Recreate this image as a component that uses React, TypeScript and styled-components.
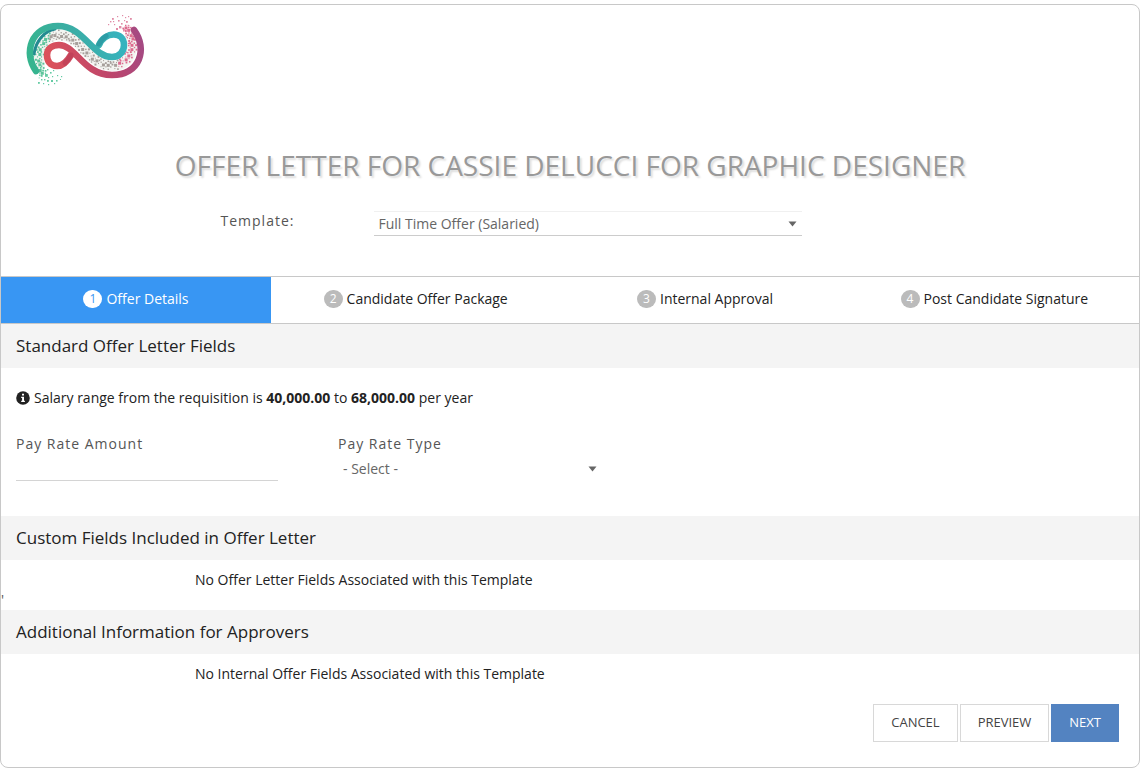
import React from "react";
import styled, { createGlobalStyle } from "styled-components";

const GlobalStyle = createGlobalStyle`
  *, *::before, *::after { box-sizing: border-box; }
  body {
    margin: 0;
    background: #fff;
    color: #222;
    font: 14px/20px "Open Sans", "Noto Sans", sans-serif;
  }
  button, input, select { font: inherit; }
`;

const Panel = styled.main`
  margin: 4px 0 0;
  border: 1px solid #c8c8c8;
  border-radius: 8px;
  background: #fff;
  overflow: hidden;
`;

const Brand = styled.header`
  padding: 7px 24px 0;
  height: 140px;
`;

const LogoArt = styled.svg`
  display: block;
  width: 122px;
  height: 78px;
`;

const Title = styled.h1`
  margin: 0;
  text-align: center;
  font-size: 28px;
  line-height: 40px;
  font-weight: 400;
  color: #999;
  text-transform: uppercase;
  text-shadow: 2px 2px 2px #ddd;
`;

const TemplateRow = styled.div`
  display: grid;
  grid-template-columns: 153px minmax(0, 428px);
  justify-content: center;
  align-items: start;
  padding: 26px 118px 40px 0;
`;

const FieldLabel = styled.label`
  display: block;
  letter-spacing: 1px;
  color: #555;
`;

const SelectBox = styled.div<{ $lined?: boolean }>`
  display: flex;
  align-items: center;
  position: relative;
  height: 25px;
  border-top: 1px solid ${(p) => (p.$lined ? "#f0f0f0" : "transparent")};
  border-bottom: 1px solid ${(p) => (p.$lined ? "#ccc" : "transparent")};
`;

const Select = styled.select`
  appearance: none;
  width: 100%;
  height: 23px;
  padding: 0 20px 0 5px;
  border: 0;
  background: transparent;
  color: #666;
`;

const Caret = styled.svg`
  position: absolute;
  right: 5px;
  width: 9px;
  height: 6px;
  pointer-events: none;
`;

const Steps = styled.nav`
  display: grid;
  grid-template-columns: 270px repeat(3, 1fr);
  border-top: 1px solid #c8c8c8;
  border-bottom: 1px solid #c8c8c8;
`;

const Step = styled.button<{ $active?: boolean }>`
  display: flex;
  align-items: center;
  justify-content: center;
  gap: 4px;
  height: 46px;
  padding: 0 0 2px;
  border: 0;
  background: ${(p) => (p.$active ? "#3896f3" : "#fff")};
  color: ${(p) => (p.$active ? "#fff" : "#222")};
  cursor: pointer;
`;

const StepNumber = styled.span<{ $active?: boolean }>`
  width: 19px;
  height: 18px;
  border-radius: 9px;
  background: ${(p) => (p.$active ? "#fff" : "#bbb")};
  color: ${(p) => (p.$active ? "#3896f3" : "#fff")};
  font-size: 12px;
  line-height: 18px;
  text-align: center;
`;

const SectionTitle = styled.h2`
  margin: 0;
  padding: 10px 15px;
  background: #f4f4f4;
  font-size: 17px;
  line-height: 24px;
  font-weight: 400;
`;

const OfferFields = styled.section`
  padding: 20px 15px 35px;
`;

const SalaryNote = styled.p`
  display: flex;
  align-items: center;
  gap: 4px;
  margin: 0 0 26px;
`;

const InfoMark = styled.svg`
  width: 14px;
  height: 14px;
  flex: none;
`;

const FieldGrid = styled.div`
  display: grid;
  grid-template-columns: 262px 264px;
  column-gap: 60px;
`;

const TextInput = styled.input`
  display: block;
  width: 100%;
  height: 27px;
  padding: 0 5px;
  border: 0;
  border-bottom: 1px solid #d4d4d4;
  background: transparent;
  color: #555;
`;

const FieldSelect = styled.div`
  padding-top: 2px;
`;

const EmptyNote = styled.p`
  margin: 0;
  padding: 10px 15px 0 194px;
`;

const NoteTail = styled.div`
  height: 20px;
  color: #555;
`;

const Actions = styled.footer`
  display: flex;
  justify-content: flex-end;
  gap: 2px;
  padding: 0 20px 25px;
`;

const ActionButton = styled.button<{ $primary?: boolean }>`
  height: 38px;
  padding: 0 17px 2px;
  border: 1px solid ${(p) => (p.$primary ? "#5383c1" : "#d8d8d8")};
  background: ${(p) => (p.$primary ? "#5383c1" : "#fff")};
  color: ${(p) => (p.$primary ? "#fff" : "#444")};
  font-size: 13px;
  text-transform: uppercase;
  cursor: pointer;
`;

// Centre line of the speckled band that runs between the two ribbons.
const BAND: [number, number][] = [
  [43, 76], [39, 68], [38, 58], [41, 46], [48, 37], [58, 35], [70, 37],
  [80, 46], [90, 56], [100, 63], [112, 66], [123, 62], [131, 53],
  [133, 42], [130, 33], [124, 26],
];

type Speck = { x: number; y: number; s: number; fill: string };

function makeSpecks(): Speck[] {
  let seed = 90210;
  const rnd = () => {
    seed = (seed * 16807) % 2147483647;
    return seed / 2147483647;
  };
  const specks: Speck[] = [];
  for (let i = 0; i < BAND.length - 1; i++) {
    const [x0, y0] = BAND[i];
    const [x1, y1] = BAND[i + 1];
    const len = Math.hypot(x1 - x0, y1 - y0);
    const nx = -(y1 - y0) / len;
    const ny = (x1 - x0) / len;
    for (let k = 0; k < 13; k++) {
      const t = k / 13;
      const off = (((k * 5) % 13) / 12 - 0.5) * 9 + (rnd() - 0.5);
      const x = x0 + (x1 - x0) * t + nx * off;
      const y = y0 + (y1 - y0) * t + ny * off;
      const fill = x < 50 ? "#5cc49b" : x < 118 ? "#a69f9b" : "#dd6c8f";
      const s = k === 4 || k === 9 ? 3 : 0.9 + rnd() * 1.1;
      specks.push({ x: x - s / 2, y: y - s / 2, s, fill });
    }
  }
  return specks;
}

const SPECKS = makeSpecks();

// Loose squares that drift away from both ends of the band.
const DRIFT: [number, number, number][] = [
  [38, 82, 1.8], [41, 79, 1.4], [43, 83, 1.2], [45, 74, 2.8], [44, 79, 1.4],
  [47, 80, 1.8], [48, 77, 1.2], [50, 72, 1.6], [51, 80, 2], [52, 76, 1.2],
  [48, 84, 1.2], [54, 83, 1.2], [56, 80, 1.6], [57, 75, 1.2], [61, 76, 1.2],
  [60, 79, 1], [53, 70, 1.2], [47, 69, 1.4],
  [108, 24, 1.2], [110, 21, 1.4], [112, 18, 1.8], [114, 24, 1.2], [117, 16, 1.2],
  [118, 20, 1.6], [119, 26, 2.4], [121, 23, 1.6], [122, 15, 1.2], [124, 20, 1.2],
  [126, 21, 1.8], [128, 16, 1.2], [130, 18, 1.8], [125, 17, 1.2], [128, 25, 1.4],
  [116, 28, 2], [113, 21, 1.2], [123, 29, 1.8],
];

function Logo() {
  return (
    <LogoArt viewBox="25 12 122 78" role="img" aria-label="Company logo">
      <defs>
        <linearGradient id="teal" gradientUnits="userSpaceOnUse" x1="28" y1="70" x2="126" y2="40">
          <stop offset="0" stopColor="#35b58c" />
          <stop offset="0.5" stopColor="#3bada4" />
          <stop offset="1" stopColor="#35b3c0" />
        </linearGradient>
        <linearGradient id="red" gradientUnits="userSpaceOnUse" x1="46" y1="60" x2="143" y2="35">
          <stop offset="0" stopColor="#dc525a" />
          <stop offset="0.6" stopColor="#bd456b" />
          <stop offset="1" stopColor="#a34a84" />
        </linearGradient>
      </defs>
      <path
        d="M40 68C36 46 46 35 59 35C83 35 88 66 112 66C130 66 137 47 129 32"
        fill="none"
        stroke="#f3f4f1"
        strokeWidth="10"
      />
      {SPECKS.map((p, i) => (
        <rect key={i} x={p.x} y={p.y} width={p.s} height={p.s} fill={p.fill} />
      ))}
      {DRIFT.map(([x, y, s], i) => (
        <rect key={i} x={x} y={y} width={s} height={s} fill={x < 90 ? "#65cba4" : "#e08ba6"} />
      ))}
      <g fill="none" strokeLinecap="round" strokeLinejoin="round">
        <path d="M34 54C36 40 45 31 55 29" stroke="#248b91" strokeWidth="3" />
        <path d="M36 71C23 53 31 26 58 26C84 26 92 57 112 57C120 57 124 51 124 45C124 31 105 31 99 45" stroke="url(#teal)" strokeWidth="6.6" />
        <path d="M99 44C101 40 103 38 106 36" stroke="#218795" strokeWidth="5" strokeOpacity="0.5" />
        <path d="M71 55C67 62 63 66 57 66C50 66 47 61 47 55C47 48 53 45 59 45C76 45 83 75 112 75C140 75 148 49 134 30" stroke="url(#red)" strokeWidth="6.6" />
        <path d="M71 55C69 59 67 61 65 63" stroke="#b33851" strokeWidth="5" strokeOpacity="0.5" />
      </g>
    </LogoArt>
  );
}

function DownCaret() {
  return (
    <Caret viewBox="0 0 9 6" aria-hidden="true">
      <path d="M0.5 0.5h8l-4 5z" fill="#666" />
    </Caret>
  );
}

const STEPS = [
  "Offer Details",
  "Candidate Offer Package",
  "Internal Approval",
  "Post Candidate Signature",
];

export default function App() {
  return (
    <>
      <GlobalStyle />
      <Panel>
        <Brand>
          <Logo />
        </Brand>
        <Title>Offer Letter for Cassie Delucci for Graphic Designer</Title>
        <TemplateRow>
          <FieldLabel htmlFor="template">Template:</FieldLabel>
          <SelectBox $lined>
            <Select id="template">
              <option>Full Time Offer (Salaried)</option>
            </Select>
            <DownCaret />
          </SelectBox>
        </TemplateRow>

        <Steps aria-label="Offer steps">
          {STEPS.map((label, i) => (
            <Step key={label} type="button" $active={i === 0} aria-current={i === 0 ? "step" : undefined}>
              <StepNumber $active={i === 0}>{i + 1}</StepNumber>
              {label}
            </Step>
          ))}
        </Steps>

        <SectionTitle>Standard Offer Letter Fields</SectionTitle>
        <OfferFields>
          <SalaryNote>
            <InfoMark viewBox="0 0 14 14" aria-hidden="true">
              <circle cx="7" cy="7" r="6.8" fill="#222" />
              <path d="M6 2.7h2v1.9H6zM5.2 5.8H8v3.9h.9V11H5.2V9.7h.9V7.1h-.9z" fill="#fff" />
            </InfoMark>
            <span>
              Salary range from the requisition is <b>40,000.00</b> to <b>68,000.00</b> per year
            </span>
          </SalaryNote>
          <FieldGrid>
            <div>
              <FieldLabel htmlFor="amount">Pay Rate Amount</FieldLabel>
              <TextInput id="amount" type="text" />
            </div>
            <div>
              <FieldLabel htmlFor="type">Pay Rate Type</FieldLabel>
              <FieldSelect>
                <SelectBox>
                  <Select id="type">
                    <option>- Select -</option>
                  </Select>
                  <DownCaret />
                </SelectBox>
              </FieldSelect>
            </div>
          </FieldGrid>
        </OfferFields>

        <SectionTitle>Custom Fields Included in Offer Letter</SectionTitle>
        <EmptyNote>No Offer Letter Fields Associated with this Template</EmptyNote>
        <NoteTail>'</NoteTail>

        <SectionTitle>Additional Information for Approvers</SectionTitle>
        <EmptyNote>No Internal Offer Fields Associated with this Template</EmptyNote>
        <NoteTail />

        <Actions>
          <ActionButton type="button">Cancel</ActionButton>
          <ActionButton type="button">Preview</ActionButton>
          <ActionButton type="button" $primary>Next</ActionButton>
        </Actions>
      </Panel>
    </>
  );
}
